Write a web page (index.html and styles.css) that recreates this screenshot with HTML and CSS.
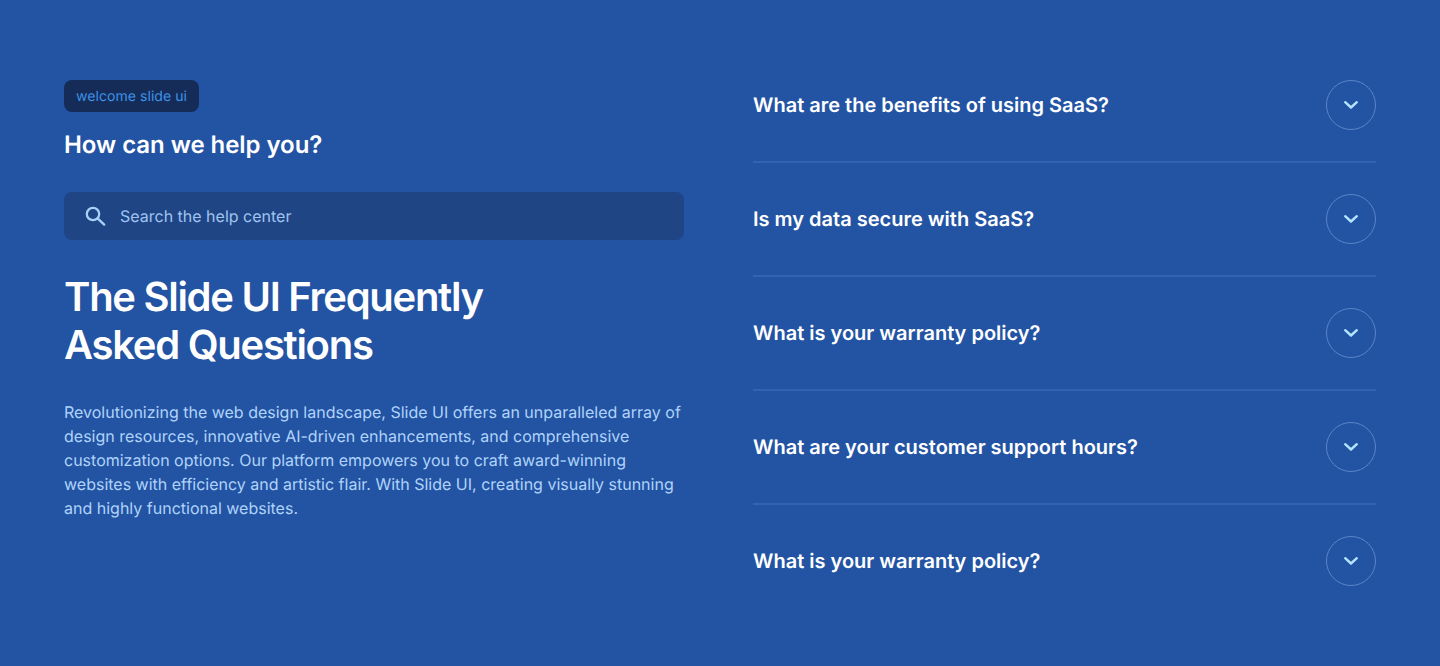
FILE: index.html
```html
<!DOCTYPE html>
<html lang="en">
<head>
<meta charset="utf-8">
<title>Slide UI FAQ</title>
<link rel="stylesheet" href="styles.css">
</head>
<body>
<main class="page">
  <section class="intro">
    <span class="badge">welcome slide ui</span>
    <h2 class="help">How can we help you?</h2>
    <div class="search">
      <svg class="search-icon" width="24" height="24" viewBox="0 0 24 24" fill="none" stroke="currentColor" stroke-width="2.300" stroke-linecap="round"><circle cx="9" cy="10" r="6.200"/><path d="M13.600 14.400L20.200 20.600"/></svg>
      <span class="search-text">Search the help center</span>
    </div>
    <h1 class="title">The Slide UI Frequently<br>Asked Questions</h1>
    <p class="desc">Revolutionizing the web design landscape, Slide UI offers an unparalleled array of design resources, innovative AI-driven enhancements, and comprehensive customization options. Our platform empowers you to craft award-winning websites with efficiency and artistic flair. With Slide UI, creating visually stunning and highly functional websites.</p>
  </section>
  <section class="faq">
    <div class="item"><span class="q">What are the benefits of using SaaS?</span><span class="toggle"><svg width="16" height="16" viewBox="0 0 16 16" fill="none" stroke="currentColor" stroke-width="2.400" stroke-linecap="round" stroke-linejoin="round"><path d="M2.200 5.200L8 10.500L13.800 5.200"/></svg></span></div>
    <div class="item"><span class="q">Is my data secure with SaaS?</span><span class="toggle"><svg width="16" height="16" viewBox="0 0 16 16" fill="none" stroke="currentColor" stroke-width="2.400" stroke-linecap="round" stroke-linejoin="round"><path d="M2.200 5.200L8 10.500L13.800 5.200"/></svg></span></div>
    <div class="item"><span class="q">What is your warranty policy?</span><span class="toggle"><svg width="16" height="16" viewBox="0 0 16 16" fill="none" stroke="currentColor" stroke-width="2.400" stroke-linecap="round" stroke-linejoin="round"><path d="M2.200 5.200L8 10.500L13.800 5.200"/></svg></span></div>
    <div class="item"><span class="q">What are your customer support hours?</span><span class="toggle"><svg width="16" height="16" viewBox="0 0 16 16" fill="none" stroke="currentColor" stroke-width="2.400" stroke-linecap="round" stroke-linejoin="round"><path d="M2.200 5.200L8 10.500L13.800 5.200"/></svg></span></div>
    <div class="item"><span class="q">What is your warranty policy?</span><span class="toggle"><svg width="16" height="16" viewBox="0 0 16 16" fill="none" stroke="currentColor" stroke-width="2.400" stroke-linecap="round" stroke-linejoin="round"><path d="M2.200 5.200L8 10.500L13.800 5.200"/></svg></span></div>
  </section>
</main>
</body>
</html>
```
FILE: styles.css
```css
* { box-sizing: border-box; margin: 0; padding: 0; }
html, body { height: 100%; }
body { background: #2353a3; font-family: Inter, sans-serif; color: #fff; text-rendering: geometricPrecision; }
.page { display: flex; justify-content: space-between; padding: 80px 64px; height: 666px; overflow: hidden; }
.intro { width: 620px; display: flex; flex-direction: column; align-items: flex-start; }
.badge { height: 32px; line-height: 33px; padding: 0 12px; border-radius: 8px; background: #142c57; color: #3f92e8; font-size: 14px; letter-spacing: 0.06px; }
.help { margin-top: 17px; font-size: 24px; line-height: 32px; font-weight: 600; letter-spacing: -0.05px; }
.search { margin-top: 31px; width: 100%; height: 48px; display: flex; align-items: center; gap: 12px; padding: 0 20px; border-radius: 8px; background: #1f4585; }
.search-icon { color: #a9d0f8; flex: none; }
.search-text { font-size: 16px; color: #a0c4f0; }
.title { margin-top: 33px; font-size: 40px; line-height: 48px; font-weight: 600; letter-spacing: -1.28px; }
.desc { margin-top: 31px; font-size: 16px; line-height: 24px; color: #b0d3fa; }
.faq { width: 623px; display: flex; flex-direction: column; }
.item { display: flex; justify-content: space-between; align-items: center; padding-bottom: 31px; margin-bottom: 31px; border-bottom: 2px solid #3362b2; }
.item:last-child { border-bottom: 0; margin-bottom: 0; padding-bottom: 0; }
.q { font-size: 20px; line-height: 28px; font-weight: 600; }
.toggle { width: 50px; height: 50px; flex: none; display: flex; align-items: center; justify-content: center; border-radius: 50%; border: 1px solid #5c85c9; color: #b4e4ff; }
```
